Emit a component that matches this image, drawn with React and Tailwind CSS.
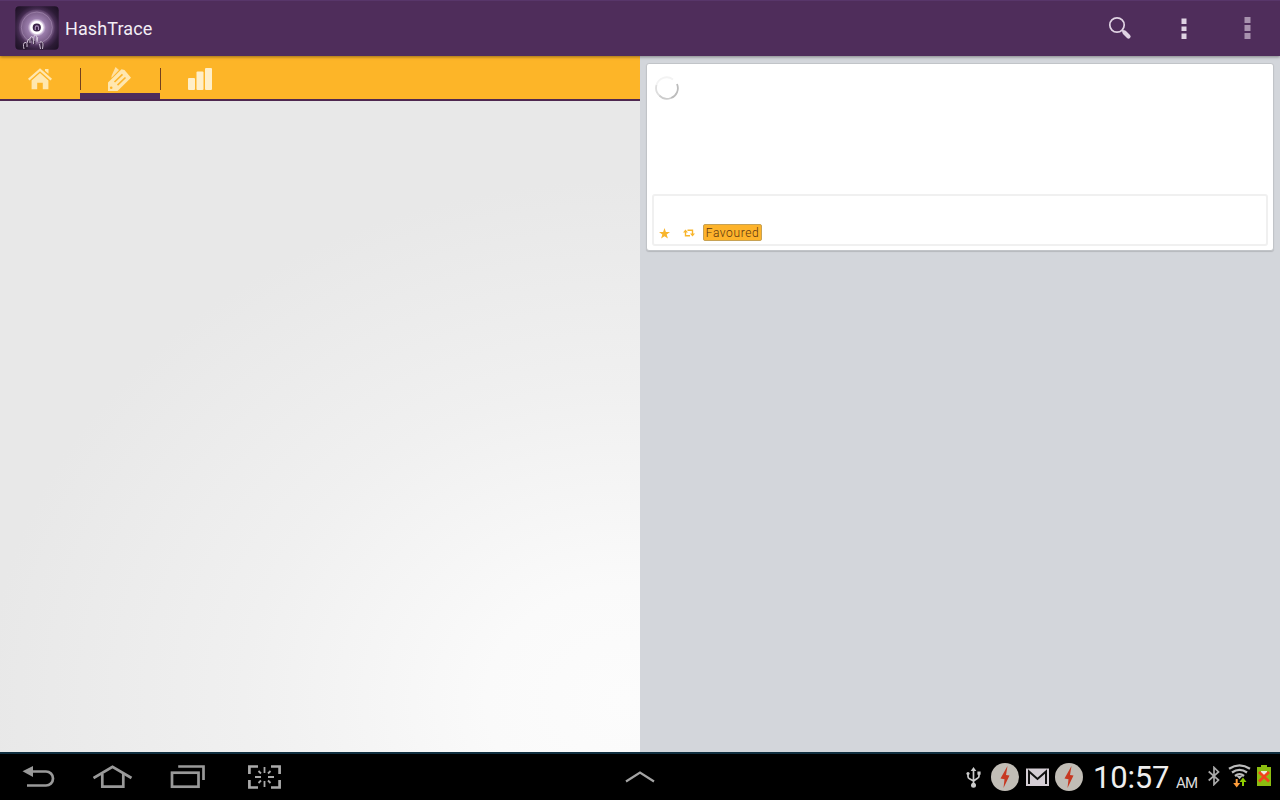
import React from "react";

function Logo() {
  return (
    <svg width="44" height="44" viewBox="0 0 44 44">
      <defs>
        <radialGradient id="disc" cx="50%" cy="50%" r="50%">
          <stop offset="0" stopColor="#fff" />
          <stop offset="0.36" stopColor="#e9dcef" />
          <stop offset="0.5" stopColor="#9a7dab" />
          <stop offset="0.85" stopColor="#7b5f89" />
          <stop offset="1" stopColor="#553a62" />
        </radialGradient>
        <radialGradient id="tile" cx="50%" cy="50%" r="70%">
          <stop offset="0.5" stopColor="#5c3c6b" />
          <stop offset="0.75" stopColor="#2c1b36" />
          <stop offset="1" stopColor="#1b1022" />
        </radialGradient>
      </defs>
      <rect x="0.3" y="0.3" width="43.4" height="43.4" rx="4" fill="url(#tile)" />
      <circle cx="21.800" cy="21.500" r="18" fill="url(#disc)" />
      <circle cx="21.800" cy="21.500" r="15.500" fill="none" stroke="#a78db3" strokeWidth="0.6" />
      <circle cx="21.800" cy="21.500" r="5.300" fill="#3b2348" stroke="#fff" strokeWidth="2.400" />
      <path d="M20.300 24v-2.500a1.600 1.600 0 0 1 3.200 0V24" fill="none" stroke="#a98fb8" strokeWidth="1.100" />
      <path d="M10 43v-5M14 38l1-4M19 37l-1-4M27 43v-6" fill="none" stroke="#28182f" strokeWidth="3" strokeLinecap="round" opacity="0.65" />
      <path d="M9 43q-1.500-6 1-6.500T12 41M12 37q.5-4 3-4.500M15 37q-.5-6 1.500-6.500T18.500 38M19 35q-1-5 1-6t1.800 5.500M22 36l.7-5M25 36q3-1 3 3l-.5 4M24.500 38l1 5" fill="none" stroke="#d8ccdd" strokeWidth="0.9" />
    </svg>
  );
}

function Header() {
  return (
    <header className="relative z-10 flex h-14 shrink-0 items-center border-t border-[#58366a] bg-[#4f2d5b] pl-[15px] pr-[29px] shadow-[0_1px_3px_rgba(0,0,0,0.4)]">
      <div className="-mt-px h-11 w-11"><Logo /></div>
      <h1 className="ml-[6px] font-[Roboto,sans-serif] text-[18px] leading-6 tracking-[0.1px] text-[#f3eef5]">HashTrace</h1>
      <div className="ml-auto flex items-center">
        <svg width="24" height="24" viewBox="0 0 24 24" className="-mt-[2px] mr-[49px]">
          <circle cx="9" cy="9" r="7.200" fill="none" stroke="#e0d3e3" strokeWidth="1.700" />
          <path d="M14 14l2 2" stroke="#e0d3e3" strokeWidth="2" />
          <path d="M16.500 16.500l4 4" stroke="#e0d3e3" strokeWidth="4.200" strokeLinecap="round" />
        </svg>
        <svg width="6" height="22" viewBox="0 0 6 22" className="mr-[57px]" fill="#dfd3e3">
          <path d="M.5.500H5.500V6H.5zM.5 8.500H5.500V13H.5zM.5 15.500H5.500V21H.5z" />
        </svg>
        <svg width="7" height="22" viewBox="0 0 7 22" className="-mt-[2px]" fill="#a892ae">
          <path d="M.5 0h6v6h-6zM.5 8h6v6h-6zM.5 16h6v6h-6z" />
        </svg>
      </div>
    </header>
  );
}

function Tabs() {
  return (
    <nav className="flex h-[45px] shrink-0 border-b-2 border-[#4f2850] bg-[#fdb528]">
      <div className="flex w-20 justify-center pt-[11px]">
        <svg width="24" height="23" viewBox="0 0 24 23" fill="#ffe7af">
          <path d="M12 1.200L24 11.700l-1.500 1.700L12 4.200 1.500 13.400 0 11.700z" />
          <path d="M12 6.100l8.400 7.400v8.700h-5.600v-6.400H9.200v6.400H3.600v-8.700z" />
          <path d="M17 2h3.500v4.800L17 3.800z" />
        </svg>
      </div>
      <div className="flex w-20 flex-col border-b-[6px] border-[#4f2d5b]">
        <div className="mt-3 flex h-[22px] w-20 border-l border-[#74401e]">
          <svg width="26" height="26" viewBox="0 0 26 26" className="-mt-[1px] ml-[26px] shrink-0">
            <path d="M4.500 9L8.500 0l3.500 3L4.500 11z" fill="#ffe0a0" />
            <path d="M1 15.500L14.500 2.200l3 .8L24 10.800 10.500 24H1z" fill="#ffe7af" />
            <path d="M7.500 15L15.500 7.300M10.500 18.200L18.500 10.500" stroke="#fdb528" strokeWidth="1.600" />
            <circle cx="4.200" cy="20.700" r="1.300" fill="#fdb528" />
          </svg>
        </div>
      </div>
      <div className="mt-3 flex h-[22px] w-20 border-l border-[#74401e] pl-[27px]">
        <svg width="24" height="22" viewBox="0 0 24 22" fill="#ffefc8">
          <rect y="10" width="7" height="12" rx="1" />
          <rect x="8.500" y="3.500" width="7" height="18.500" rx="1" />
          <rect x="17" width="7" height="22" rx="1" />
        </svg>
      </div>
    </nav>
  );
}

function StatusCard() {
  return (
    <article className="mx-[6px] mt-[7px] flex h-[188px] flex-col rounded-[3px] border border-[#c1c4c8] bg-white px-[5px] pb-[4px] pt-[12px] shadow-[0_1px_1px_rgba(0,0,0,0.14)]">
      <svg width="24" height="24" viewBox="0 0 24 24" className="ml-[3px]" fill="none" strokeWidth="1.800">
        <path d="M1.500 9A10.500 10.500 0 0 1 18 3.500" stroke="#f3f3f3" />
        <path d="M1.500 9A10.500 10.500 0 0 0 5 20" stroke="#dedede" />
        <path d="M4.500 19.700A10.500 10.500 0 0 0 16 22" stroke="#cccccc" />
        <path d="M16 22A10.500 10.500 0 0 0 22 8" stroke="#bcbcbc" />
      </svg>
      <div className="mt-auto flex h-[52px] items-end rounded-[3px] border-2 border-[#f0f0f0] pb-[3px] pl-[5px]">
        <svg width="11" height="11" viewBox="0 0 24 24" fill="#f8b52c" className="mb-[2px]">
          <path d="M12 0l3 8.600 9 .2-7.200 5.400L19.400 23 12 17.800 4.600 23l2.600-8.800L0 8.800l9-.2z" />
        </svg>
        <svg width="12" height="8" viewBox="0 0 12 8" className="mb-[4px] ml-[13px]">
          <path d="M2.500 2.500v4.200H7M4.500 1.300h5V5.500" fill="none" stroke="#f8b52c" strokeWidth="1.400" />
          <path d="M0 3.500L2.500.500 5 3.500zM7 4.500h5L9.500 7.500z" fill="#f8b52c" />
        </svg>
        <span className="ml-[8px] flex h-[17px] w-[59px] items-center justify-center rounded-[2px] border border-[#c7a254] bg-[#fdb32b] font-[Roboto,sans-serif] text-[12px] font-light leading-none tracking-[0.6px] text-[#5c3410]">Favoured</span>
      </div>
    </article>
  );
}

function Lightning() {
  return (
    <svg width="28" height="28" viewBox="0 0 28 28">
      <circle cx="14" cy="14" r="14" fill="#c1bdb6" />
      <path d="M16.500 3L9.500 15.500l4 .8L12.500 25l6-12.500-3.500-.6z" fill="#c73821" />
    </svg>
  );
}

function SystemBar() {
  return (
    <footer className="flex h-12 shrink-0 items-start border-t-2 border-[#102f40] bg-black">
      <div className="flex w-[320px] pl-[22px] pt-[10px]">
        <svg width="33" height="26" viewBox="0 0 33 26">
          <path d="M9 7.500H24a7 7 0 0 1 0 14H5" fill="none" stroke="#999" strokeWidth="2.700" />
          <path d="M.5 7.300L11 2v11z" fill="#999" />
        </svg>
        <svg width="40" height="26" viewBox="0 0 40 26" className="ml-[38px]" fill="none" stroke="#999" strokeWidth="2.700">
          <path d="M.5 14L19.500 2.800 38.500 14" />
          <path d="M9.300 10v12.700h21V10" />
        </svg>
        <svg width="36" height="26" viewBox="0 0 36 26" className="ml-[37px]" fill="none" stroke="#999" strokeWidth="2.700">
          <rect x="2" y="8.700" width="26.500" height="14" />
          <path d="M8.200 2.500H33.500V16" />
        </svg>
        <svg width="34" height="26" viewBox="0 0 34 26" className="ml-[42px]" fill="none" stroke="#aaa">
          <path d="M1.400 10V2.500H10M23 2.500h8.600V10M31.600 16v7.500H23M10 23.500H1.400V16" strokeWidth="2.700" />
          <path d="M16.500 3v6M16.500 17v6M7 13h6M20 13h6M10.500 7l2.500 2.500M22.500 7L20 9.500M10.500 19l2.500-2.500M22.500 19L20 16.500" strokeWidth="1.800" />
        </svg>
      </div>
      <div className="flex w-[640px] justify-center pt-[16px]">
        <svg width="30" height="13" viewBox="0 0 30 13">
          <path d="M1 11.500L15 2.500l14 9" fill="none" stroke="#a4a4a4" strokeWidth="2.200" />
        </svg>
      </div>
      <div className="flex w-[320px] pl-[6px] pt-[9px]">
        <svg width="15" height="22" viewBox="0 0 15 22" className="mt-[4px]" fill="none" stroke="#ccc" strokeWidth="1.700">
          <path d="M7.500 3v15M2 7v2.500q0 1.500 1.500 2.300L7.500 14M13 6v3q0 1.500-1.500 2.300L7.500 14" />
          <path d="M7.500 0L10.300 4H4.700z" fill="#ccc" stroke="none" />
          <circle cx="7.500" cy="18.300" r="2.500" fill="#ccc" stroke="none" />
          <circle cx="2" cy="6.500" r="1.600" fill="#ccc" stroke="none" />
          <path d="M11.400 4.500h3.200v3.200h-3.200z" fill="#ccc" stroke="none" />
        </svg>
        <div className="ml-[10px]"><Lightning /></div>
        <svg width="23" height="18" viewBox="0 0 23 18" className="ml-[7px] mt-[5px]">
          <path d="M0 .500h23V18H0z" fill="#d5ced5" />
          <path d="M3 16V3.500l8.500 7.500L20 3.500V16" fill="none" stroke="#111" strokeWidth="2" />
        </svg>
        <div className="ml-[6px]"><Lightning /></div>
        <span className="ml-[10px] w-[76px] whitespace-nowrap font-[Roboto,sans-serif] text-[31px] leading-[29px] tracking-[-0.2px] text-[#eee]">10:57</span>
        <span className="ml-[7px] mt-[10px] w-[22px] font-[Roboto,sans-serif] text-[15px] leading-[20px] tracking-[-0.8px] text-[#ddd]">AM</span>
        <svg width="12" height="20" viewBox="0 0 12 20" className="ml-[10px] mt-[3px]">
          <path d="M.7 5.500l9.800 8.500L6 18.500V1.500L10.500 6 .7 14.500" fill="none" stroke="#aaa" strokeWidth="1.700" />
        </svg>
        <svg width="23" height="24" viewBox="0 0 23 24" className="ml-[8px] mt-[1px]" fill="none" stroke="#bcbcbc" strokeWidth="2.300">
          <path d="M1 4.700Q11.500-2 22 4.700M4 8.500Q11.500 3.200 19 8.500M7 12Q11.500 8.200 16 12" />
          <path d="M8.500 12h6l-3 3.200z" fill="#bcbcbc" stroke="none" />
          <path d="M8.700 15v5" stroke="#ff9e3c" strokeWidth="2" />
          <path d="M5.200 19h7l-3.500 4.500z" fill="#ff9e3c" stroke="none" />
          <path d="M15 17v5" stroke="#8fce00" strokeWidth="2" />
          <path d="M11.500 18h7L15 13.500z" fill="#8fce00" stroke="none" />
        </svg>
        <svg width="14" height="21" viewBox="0 0 14 21" className="ml-[6px] mt-[2px]">
          <path d="M4 0h6v2h4v19H0V2h4z" fill="#8cbd10" />
          <path d="M4 6h6v5H4z" fill="#e9efdc" />
          <path d="M2 7l10 9.500M12 7L2 16.500" stroke="#f1441c" strokeWidth="2.700" />
        </svg>
      </div>
    </footer>
  );
}

export default function App() {
  return (
    <div className="flex h-[800px] w-[1280px] flex-col overflow-hidden">
      <Header />
      <main className="flex min-h-0 flex-1">
        <section className="flex w-[640px] flex-col">
          <Tabs />
          <div className="flex-1 bg-[radial-gradient(ellipse_640px_520px_at_98%_92%,#fcfcfc_0%,#fafafa_22%,#f0f0f0_60%,#e8e8e8_100%)]" />
        </section>
        <section className="w-[640px] bg-[#d3d6db]">
          <StatusCard />
        </section>
      </main>
      <SystemBar />
    </div>
  );
}
